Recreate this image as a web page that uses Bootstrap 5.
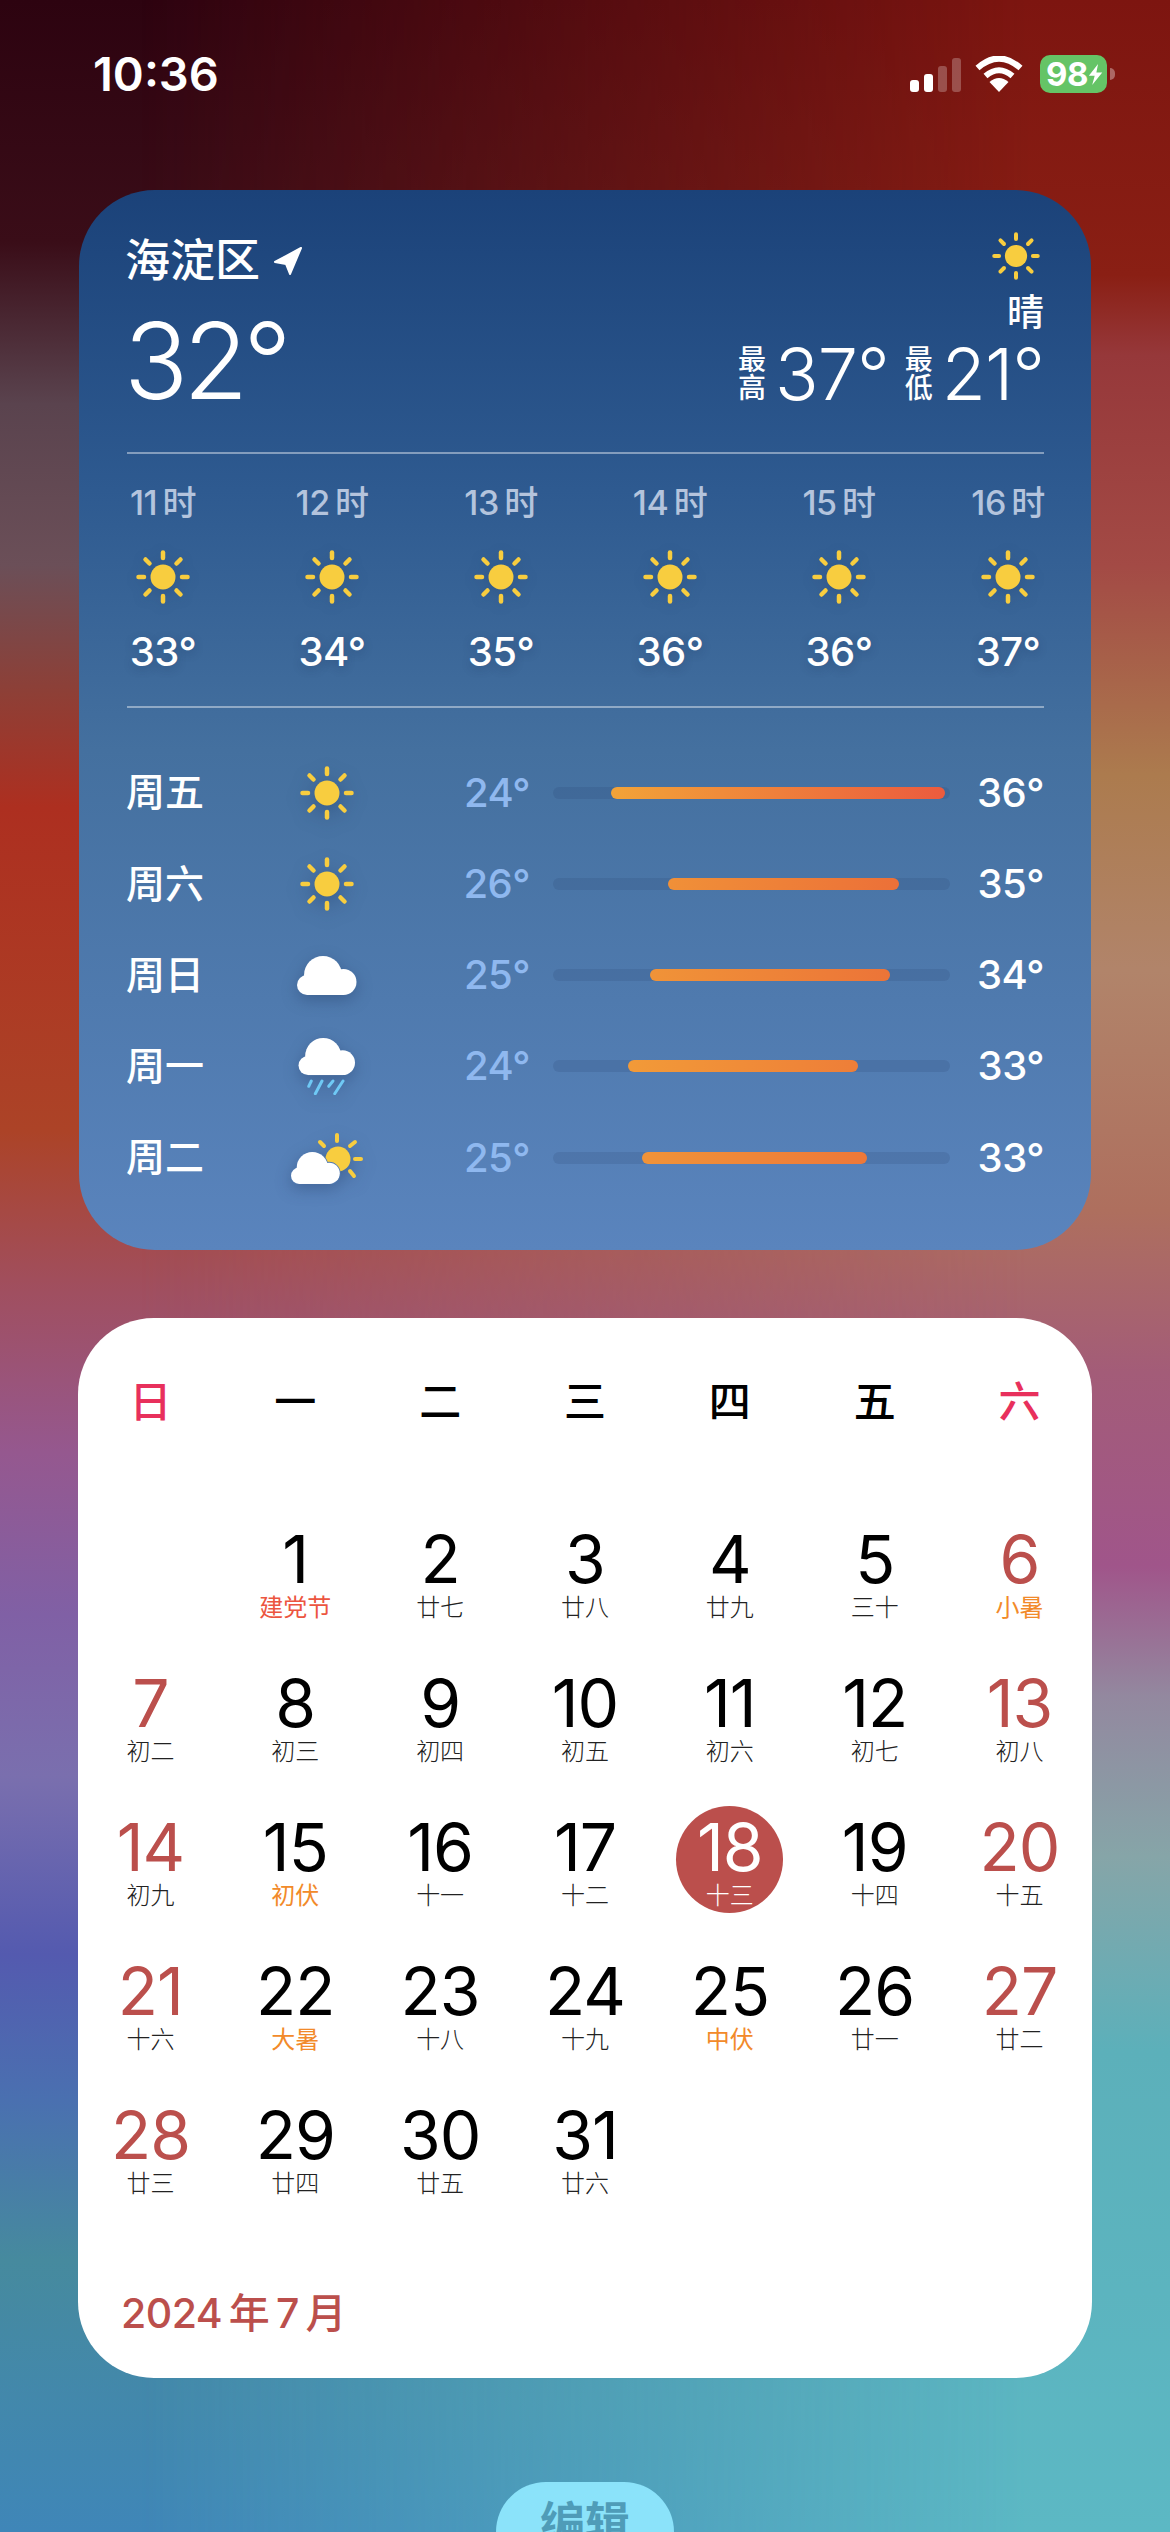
<!DOCTYPE html>
<html lang="zh">
<head>
    <meta charset="UTF-8">
    <title>小组件</title>
    <link href="https://cdn.jsdelivr.net/npm/bootstrap@5.3.0/dist/css/bootstrap.min.css" rel="stylesheet">
    <style>
        body { margin: 0; background: #000; font-family: Inter, "Noto Sans CJK SC", sans-serif; }
        .pingmu {
            width: 1170px; height: 2532px; overflow: hidden; position: relative;
            background: linear-gradient(180deg, #2d0310 0, #3a0d18 242px, #5a434e 404px, #6b4f58 565px, #8e3f36 694px, #ad2f20 807px, #ac4327 1130px, #a04f60 1292px, #95588f 1453px, #8060a5 1615px, #7a6fae 1776px, #545aaf 1954px, #4a70b0 2100px, #468a9e 2260px, #3f86b8 2532px);
        }
        .pingmu::before {
            content: ""; position: absolute; inset: 0;
            background: linear-gradient(180deg, #7d1510 0, #8a1f14 275px, #96383a 355px, #a34a45 565px, #ac7b4e 775px, #b1846a 970px, #ae6f5e 1211px, #a35c78 1372px, #a0558a 1566px, #93889f 1696px, #86a5a8 1857px, #5cb0ba 2051px, #5cb8c4 2532px);
            -webkit-mask-image: linear-gradient(90deg, transparent 12%, #000 88%);
            mask-image: linear-gradient(90deg, transparent 12%, #000 88%);
        }
        .neirong { position: relative; }

        /* status bar */
        .zhuangtai { height: 190px; padding: 55px 55px 0 93px; }
        .shijian { font-size: 47px; line-height: 38px; font-weight: 600; color: #fff; }
        .xinhao { gap: 5px; height: 36px; margin-right: 14px; }
        .xinhao i { display: block; width: 9px; background: #fff; border-radius: 3px; }
        .xinhao i.ruo { background: rgba(255,255,255,.25); }
        .dianchi { width: 67px; height: 38px; background: #65c466; border-radius: 10px; margin-left: 17px; padding-left: 6px; color: #fff; font-size: 33px; line-height: 38px; font-weight: 700; letter-spacing: -.5px; }
        .dianchi-tou { width: 5px; height: 12px; background: rgba(255,255,255,.35); border-radius: 0 6px 6px 0; margin-left: 3px; }

        /* weather */
        .tianqi {
            width: 1012px; height: 1060px; margin-left: 79px; padding: 0 47px 0 48px;
            border-radius: 76px; color: #fff;
            background: linear-gradient(180deg, #1b4279 0, #2e5a90 300px, #44709f 560px, #5a84bd 1060px);
        }
        .tianqi-tou { height: 262px; padding-top: 45px; }
        .diming { font-size: 45px; line-height: 52px; font-weight: 500; margin-left: -2px; }
        .diming svg { margin-left: 12px; }
        .dawendu { font-size: 106px; line-height: 106px; font-weight: 300; margin: 21px 0 0 -3px; letter-spacing: -5px; }
        .tianqi-sun { margin-top: -3px; }
        .qingtian { font-size: 37px; line-height: 40px; margin-top: 13px; font-weight: 500; }
        .gaodi { margin-top: 5px; }
        .gaodi-zi { font-size: 28px; line-height: 28px; width: 28px; text-align: center; font-weight: 500; }
        .gaodi-shu { font-size: 72px; line-height: 72px; font-weight: 300; margin-left: 9px; letter-spacing: -1px; }
        .fenge { height: 2px; background: rgba(255,255,255,.42); }
        .xiaoshi { height: 252px; padding-top: 29px; }
        .xiaoshi-lie { width: 72px; display: flex; flex-direction: column; align-items: center; }
        .xiaoshi-ming { font-size: 34px; line-height: 40px; color: #b4c4dd; font-weight: 500; white-space: nowrap; letter-spacing: -.5px; }
        .xiaoshi-wen { font-size: 40px; line-height: 44px; font-weight: 500; margin-top: 26px; text-shadow: 0 3px 10px rgba(20,40,80,.25); white-space: nowrap; letter-spacing: -.5px; }
        .yaoyang { display: block; margin: 27px auto 0; filter: drop-shadow(0 2px 6px rgba(20,40,80,.2)); }
        .meitian { margin-top: 39px; }
        .tian-hang { height: 91.25px; }
        .tian-ming { width: 161px; font-size: 39px; font-weight: 500; margin-left: -1px; }
        .tian-tubiao { width: 80px; }
        .tian-tubiao svg { display: block; margin: 0 auto; filter: drop-shadow(0 5px 8px rgba(20,40,80,.3)); }
        .tian-di { width: 163px; text-align: right; font-size: 40px; font-weight: 500; color: #8fb8ef; letter-spacing: -.5px; }
        .tiao { width: 397px; height: 12px; margin-left: 23px; background: rgba(40,62,105,.16); border-radius: 6px; position: relative; }
        .tiao-nei { height: 12px; border-radius: 6px; position: absolute; top: 0; }
        .tian-gao { flex-grow: 1; text-align: right; font-size: 40px; font-weight: 500; letter-spacing: -.5px; }

        /* calendar */
        .rili { width: 1014px; height: 1060px; margin: 68px 0 0 78px; padding-top: 60px; border-radius: 76px; background: #fff; color: #000; }
        .zhou-hang, .ri-wangge { display: grid; grid-template-columns: repeat(7, 1fr); text-align: center; }
        .zhou-hang { height: 48px; font-size: 42px; line-height: 48px; margin-bottom: 92px; font-weight: 500; }
        .hongzi { color: #e8305c; }
        .ri-wangge { grid-auto-rows: 144px; }
        .ri-ge { width: 107px; height: 107px; margin: 0 auto; padding-top: 8px; border-radius: 50%; }
        .ri-shu { font-size: 66px; line-height: 66px; letter-spacing: -1px; font-weight: 400; white-space: nowrap; }
        .ri-nong { font-size: 24px; line-height: 28px; margin-top: 2px; color: #222; font-weight: 300; white-space: nowrap; }
        .zhoumo .ri-shu { color: #bb4f4c; }
        .jie .ri-nong { color: #f28a2a; font-weight: 400; }
        .jie-hong .ri-nong { color: #ec5540; font-weight: 400; }
        .jintian { background: #bb4f4c; }
        .jintian .ri-shu, .jintian .ri-nong { color: #fff; }
        .yuefen { margin: 50px 0 0 43px; font-size: 41px; line-height: 50px; font-weight: 500; color: #bb4f4c; letter-spacing: -.5px; }

        .bianji {
            display: block; width: 178px; height: 100px; margin: 104px auto 0; padding: 12px 0 28px;
            border: 0; border-radius: 50px; background: #8be3fa; color: #4f9cb8;
            font-size: 45px; line-height: 60px; font-weight: 700;
        }
    </style>
</head>
<body>

<svg width="0" height="0" class="d-block position-absolute">
    <defs>
        <symbol id="tb-sun" viewBox="0 0 54 54">
            <circle cx="27" cy="27" r="12.5" fill="#f8cd3f"/>
            <g stroke="#f8cd3f" stroke-width="4.5" stroke-linecap="round">
                <line x1="27" y1="2.5" x2="27" y2="8"/><line x1="27" y1="46" x2="27" y2="51.5"/>
                <line x1="2.5" y1="27" x2="8" y2="27"/><line x1="46" y1="27" x2="51.5" y2="27"/>
                <line x1="9.5" y1="9.5" x2="13.5" y2="13.5"/><line x1="44.5" y1="9.5" x2="40.5" y2="13.5"/>
                <line x1="9.5" y1="44.5" x2="13.5" y2="40.5"/><line x1="44.5" y1="44.5" x2="40.5" y2="40.5"/>
            </g>
        </symbol>
        <g id="tb-yun">
            <circle cx="10" cy="29" r="10"/>
            <circle cx="26" cy="19" r="19"/>
            <circle cx="46.5" cy="26" r="13"/>
            <rect x="10" y="26" width="37" height="13"/>
        </g>
    </defs>
</svg>

<div class="pingmu">
    <div class="neirong">

        <div class="zhuangtai d-flex justify-content-between align-items-start">
            <div class="shijian">10:36</div>
            <div class="d-flex align-items-center">
                <div class="xinhao d-flex align-items-end">
                    <i style="height: 12px"></i><i style="height: 18px"></i><i class="ruo" style="height: 26px"></i><i class="ruo" style="height: 34px"></i>
                </div>
                <svg width="48" height="36" viewBox="0 0 48 36">
                    <path d="M24 36 L14.5 26 Q24 18 33.5 26Z" fill="#fff"/>
                    <path d="M10.5 20 Q24 8.500 37.5 20" fill="none" stroke="#fff" stroke-width="6"/>
                    <path d="M2.500 12 Q24 -7 45.500 12" fill="none" stroke="#fff" stroke-width="6"/>
                </svg>
                <div class="dianchi d-flex align-items-center">98<svg width="18" height="25" viewBox="0 0 18 25" class="ms-auto me-1"><path d="M12 0 L1 14 H8 L5 25 L17 10 H10Z" fill="#fff"/></svg></div>
                <div class="dianchi-tou"></div>
            </div>
        </div>

        <div class="tianqi">
            <div class="tianqi-tou d-flex justify-content-between">
                <div>
                    <div class="diming d-flex align-items-center">海淀区
                        <svg width="30" height="28" viewBox="0 0 30 28"><path d="M29 1 L3 15 L14 17 L18 27Z" fill="#fff" stroke="#fff" stroke-width="2" stroke-linejoin="round"/></svg>
                    </div>
                    <div class="dawendu">32°</div>
                </div>
                <div class="d-flex flex-column align-items-end">
                    <svg width="48" height="48" class="me-1 tianqi-sun"><use href="#tb-sun"/></svg>
                    <div class="qingtian">晴</div>
                    <div class="gaodi d-flex align-items-center">
                        <div class="gaodi-zi">最高</div><div class="gaodi-shu">37°</div>
                        <div class="gaodi-zi ms-3">最低</div><div class="gaodi-shu">21°</div>
                    </div>
                </div>
            </div>

            <div class="fenge"></div>
            <div class="xiaoshi d-flex justify-content-between">
                <div class="xiaoshi-lie"><div class="xiaoshi-ming">11&#8201;时</div><svg class="yaoyang" width="54" height="54"><use href="#tb-sun"/></svg><div class="xiaoshi-wen">33°</div></div>
                <div class="xiaoshi-lie"><div class="xiaoshi-ming">12&#8201;时</div><svg class="yaoyang" width="54" height="54"><use href="#tb-sun"/></svg><div class="xiaoshi-wen">34°</div></div>
                <div class="xiaoshi-lie"><div class="xiaoshi-ming">13&#8201;时</div><svg class="yaoyang" width="54" height="54"><use href="#tb-sun"/></svg><div class="xiaoshi-wen">35°</div></div>
                <div class="xiaoshi-lie"><div class="xiaoshi-ming">14&#8201;时</div><svg class="yaoyang" width="54" height="54"><use href="#tb-sun"/></svg><div class="xiaoshi-wen">36°</div></div>
                <div class="xiaoshi-lie"><div class="xiaoshi-ming">15&#8201;时</div><svg class="yaoyang" width="54" height="54"><use href="#tb-sun"/></svg><div class="xiaoshi-wen">36°</div></div>
                <div class="xiaoshi-lie"><div class="xiaoshi-ming">16&#8201;时</div><svg class="yaoyang" width="54" height="54"><use href="#tb-sun"/></svg><div class="xiaoshi-wen">37°</div></div>
            </div>
            <div class="fenge"></div>

            <div class="meitian">
                <div class="tian-hang d-flex align-items-center">
                    <div class="tian-ming">周五</div>
                    <div class="tian-tubiao"><svg width="54" height="54"><use href="#tb-sun"/></svg></div>
                    <div class="tian-di">24°</div>
                    <div class="tiao"><div class="tiao-nei" style="left: 14.6%; width: 84.1%; background: linear-gradient(90deg, #f2a338, #ec5b3e)"></div></div>
                    <div class="tian-gao">36°</div>
                </div>
                <div class="tian-hang d-flex align-items-center">
                    <div class="tian-ming">周六</div>
                    <div class="tian-tubiao"><svg width="54" height="54"><use href="#tb-sun"/></svg></div>
                    <div class="tian-di">26°</div>
                    <div class="tiao"><div class="tiao-nei" style="left: 29%; width: 58.2%; background: linear-gradient(90deg, #f09038, #ec7038)"></div></div>
                    <div class="tian-gao">35°</div>
                </div>
                <div class="tian-hang d-flex align-items-center">
                    <div class="tian-ming">周日</div>
                    <div class="tian-tubiao"><svg width="60" height="39" viewBox="0 0 60 39" fill="#fff"><use href="#tb-yun"/></svg></div>
                    <div class="tian-di">25°</div>
                    <div class="tiao"><div class="tiao-nei" style="left: 24.4%; width: 60.5%; background: linear-gradient(90deg, #f09338, #ec7438)"></div></div>
                    <div class="tian-gao">34°</div>
                </div>
                <div class="tian-hang d-flex align-items-center">
                    <div class="tian-ming">周一</div>
                    <div class="tian-tubiao">
                        <svg width="60" height="57" viewBox="0 0 60 57" fill="#fff">
                            <use href="#tb-yun" transform="translate(1.500) scale(.95)"/>
                            <g stroke="#6fc9f5" stroke-width="3" stroke-linecap="round">
                                <line x1="14.300" y1="43" x2="11.700" y2="48.300"/><line x1="25" y1="43" x2="18.300" y2="55.700"/>
                                <line x1="36" y1="43" x2="31.700" y2="48.300"/><line x1="46" y1="43" x2="37.700" y2="55.700"/>
                            </g>
                        </svg>
                    </div>
                    <div class="tian-di">24°</div>
                    <div class="tiao"><div class="tiao-nei" style="left: 18.9%; width: 57.9%; background: linear-gradient(90deg, #f29a38, #ee7e38)"></div></div>
                    <div class="tian-gao">33°</div>
                </div>
                <div class="tian-hang d-flex align-items-center">
                    <div class="tian-ming">周二</div>
                    <div class="tian-tubiao">
                        <svg width="72" height="52" viewBox="0 0 72 52">
                            <circle cx="47" cy="27" r="12.500" fill="#f8cd3f"/>
                            <g stroke="#f8cd3f" stroke-width="4" stroke-linecap="round">
                                <line x1="46" y1="3" x2="46" y2="9"/><line x1="64" y1="27" x2="70" y2="27"/>
                                <line x1="29" y1="10" x2="33" y2="14"/><line x1="59" y1="14" x2="64" y2="10"/>
                                <line x1="59" y1="39" x2="63" y2="44"/>
                            </g>
                            <use href="#tb-yun" transform="translate(0 20) scale(.82)" fill="#fff" stroke="#5079b0" stroke-width="2"/>
                            <use href="#tb-yun" transform="translate(0 20) scale(.82)" fill="#fff"/>
                        </svg>
                    </div>
                    <div class="tian-di">25°</div>
                    <div class="tiao"><div class="tiao-nei" style="left: 22.4%; width: 56.7%; background: linear-gradient(90deg, #f09338, #ee7838)"></div></div>
                    <div class="tian-gao">33°</div>
                </div>
            </div>
        </div>

        <div class="rili">
            <div class="zhou-hang">
                <div class="hongzi">日</div><div>一</div><div>二</div><div>三</div><div>四</div><div>五</div><div class="hongzi">六</div>
            </div>
            <div class="ri-wangge">
                <div></div>
                <div class="ri-ge jie-hong"><div class="ri-shu">1</div><div class="ri-nong">建党节</div></div>
                <div class="ri-ge"><div class="ri-shu">2</div><div class="ri-nong">廿七</div></div>
                <div class="ri-ge"><div class="ri-shu">3</div><div class="ri-nong">廿八</div></div>
                <div class="ri-ge"><div class="ri-shu">4</div><div class="ri-nong">廿九</div></div>
                <div class="ri-ge"><div class="ri-shu">5</div><div class="ri-nong">三十</div></div>
                <div class="ri-ge zhoumo jie"><div class="ri-shu">6</div><div class="ri-nong">小暑</div></div>

                <div class="ri-ge zhoumo"><div class="ri-shu">7</div><div class="ri-nong">初二</div></div>
                <div class="ri-ge"><div class="ri-shu">8</div><div class="ri-nong">初三</div></div>
                <div class="ri-ge"><div class="ri-shu">9</div><div class="ri-nong">初四</div></div>
                <div class="ri-ge"><div class="ri-shu">10</div><div class="ri-nong">初五</div></div>
                <div class="ri-ge"><div class="ri-shu">11</div><div class="ri-nong">初六</div></div>
                <div class="ri-ge"><div class="ri-shu">12</div><div class="ri-nong">初七</div></div>
                <div class="ri-ge zhoumo"><div class="ri-shu">13</div><div class="ri-nong">初八</div></div>

                <div class="ri-ge zhoumo"><div class="ri-shu">14</div><div class="ri-nong">初九</div></div>
                <div class="ri-ge jie"><div class="ri-shu">15</div><div class="ri-nong">初伏</div></div>
                <div class="ri-ge"><div class="ri-shu">16</div><div class="ri-nong">十一</div></div>
                <div class="ri-ge"><div class="ri-shu">17</div><div class="ri-nong">十二</div></div>
                <div class="ri-ge jintian"><div class="ri-shu">18</div><div class="ri-nong">十三</div></div>
                <div class="ri-ge"><div class="ri-shu">19</div><div class="ri-nong">十四</div></div>
                <div class="ri-ge zhoumo"><div class="ri-shu">20</div><div class="ri-nong">十五</div></div>

                <div class="ri-ge zhoumo"><div class="ri-shu">21</div><div class="ri-nong">十六</div></div>
                <div class="ri-ge jie"><div class="ri-shu">22</div><div class="ri-nong">大暑</div></div>
                <div class="ri-ge"><div class="ri-shu">23</div><div class="ri-nong">十八</div></div>
                <div class="ri-ge"><div class="ri-shu">24</div><div class="ri-nong">十九</div></div>
                <div class="ri-ge jie"><div class="ri-shu">25</div><div class="ri-nong">中伏</div></div>
                <div class="ri-ge"><div class="ri-shu">26</div><div class="ri-nong">廿一</div></div>
                <div class="ri-ge zhoumo"><div class="ri-shu">27</div><div class="ri-nong">廿二</div></div>

                <div class="ri-ge zhoumo"><div class="ri-shu">28</div><div class="ri-nong">廿三</div></div>
                <div class="ri-ge"><div class="ri-shu">29</div><div class="ri-nong">廿四</div></div>
                <div class="ri-ge"><div class="ri-shu">30</div><div class="ri-nong">廿五</div></div>
                <div class="ri-ge"><div class="ri-shu">31</div><div class="ri-nong">廿六</div></div>
            </div>
            <div class="yuefen">2024&#8201;年&#8201;7&#8201;月</div>
        </div>

        <button class="btn bianji">编辑</button>
    </div>
</div>

<script src="https://cdn.jsdelivr.net/npm/bootstrap@5.3.0/dist/js/bootstrap.bundle.min.js"></script>
</body>
</html>
